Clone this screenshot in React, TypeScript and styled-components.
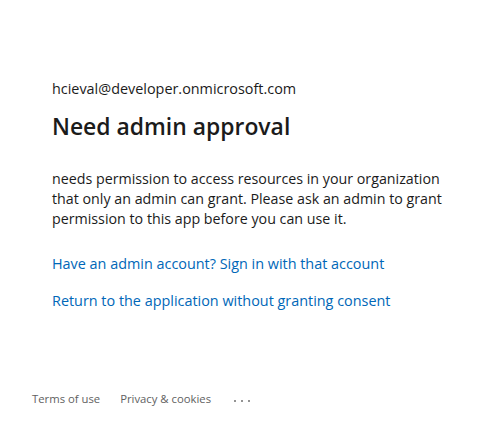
import styled, { createGlobalStyle } from 'styled-components';

const GlobalStyle = createGlobalStyle`
  html, body {
    margin: 0;
    padding: 0;
    background: #fff;
  }
  body {
    font-family: 'Open Sans', 'Noto Sans', 'Liberation Sans', sans-serif;
    color: #1b1b1b;
  }
`;

const links = [
  'Have an admin account? Sign in with that account',
  'Return to the application without granting consent',
];

const footerLinks = ['Terms of use', 'Privacy & cookies'];

export default function App() {
  return (
    <>
      <GlobalStyle />
      <Page>
        <Main>
          <Identity>hcieval@developer.onmicrosoft.com</Identity>
          <Title>Need admin approval</Title>
          <Description>
            needs permission to access resources in your organization that only an admin can grant. Please
            ask an admin to grant permission to this app before you can use it.
          </Description>
          <LinkList>
            {links.map((text) => (
              <ActionLink key={text} href="#">
                {text}
              </ActionLink>
            ))}
          </LinkList>
        </Main>
        <Footer>
          {footerLinks.map((text) => (
            <FooterLink key={text} href="#">
              {text}
            </FooterLink>
          ))}
          <More aria-label="More options">
            <Dot />
            <Dot />
            <Dot />
          </More>
        </Footer>
      </Page>
    </>
  );
}

const Page = styled.div`
  height: 423px;
  display: flex;
  flex-direction: column;
  justify-content: space-between;
`;

const Main = styled.main`
  display: flex;
  flex-direction: column;
  align-items: flex-start;
  padding: 79px 0 0 52px;
`;

const Identity = styled.div`
  font-size: 14.4px;
  line-height: 20px;
`;

const Title = styled.h1`
  margin: 14px 0 0;
  font-size: 22.9px;
  line-height: 28px;
  font-weight: 600;
`;

const Description = styled.p`
  margin: 28px 0 0;
  width: 410px;
  font-size: 14.25px;
  line-height: 20px;
`;

const LinkList = styled.div`
  display: flex;
  flex-direction: column;
  gap: 17px;
  margin-top: 25px;
`;

const ActionLink = styled.a`
  font-size: 14.4px;
  line-height: 20px;
  color: #0067b8;
  text-decoration: none;
`;

const Footer = styled.footer`
  display: flex;
  align-items: center;
  gap: 20px;
  padding: 0 0 16px 32px;
`;

const FooterLink = styled.a`
  font-size: 11.3px;
  line-height: 16px;
  color: #616161;
  text-decoration: none;
`;

const More = styled.div`
  display: flex;
  gap: 5px;
  padding: 3px 0 0 3px;
`;

const Dot = styled.span`
  width: 2px;
  height: 2px;
  border-radius: 50%;
  background: #707070;
`;
